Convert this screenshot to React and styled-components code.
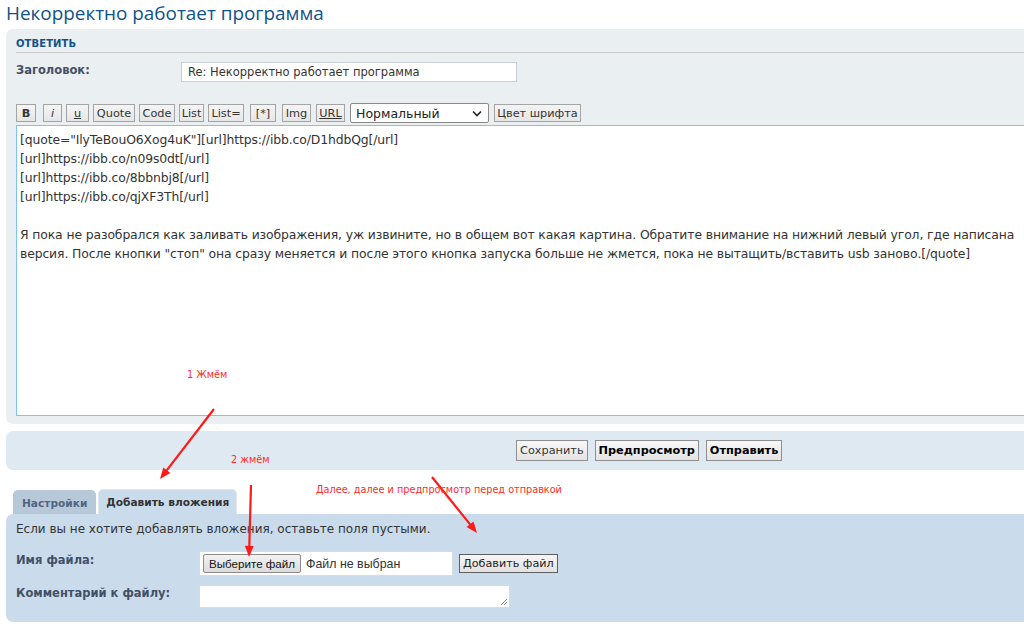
import React from "react";
import styled, { createGlobalStyle } from "styled-components";

const Global = createGlobalStyle`
  html, body { margin: 0; padding: 0; background: #fff; overflow: hidden; }
  body { font-family: "DejaVu Sans", Verdana, sans-serif; color: #333; }
  * { box-sizing: border-box; }
`;

const Page = styled.div`
  position: relative;
  width: 1024px;
  height: 628px;
  overflow: hidden;
  padding-left: 6px;
`;

const Title = styled.h2`
  margin: 0;
  height: 29px;
  padding-top: 1px;
  font-family: "Open Sans", "DejaVu Sans", sans-serif;
  font-weight: 400;
  font-size: 18.9px;
  line-height: 24px;
  color: #105289;
  white-space: nowrap;
`;

const Panel = styled.div`
  width: 1290px;
  background: ${(p) => p.$bg};
  border-radius: 7px;
  padding: ${(p) => p.$pad};
  margin-top: ${(p) => p.$mt || 0}px;
`;

const PanelHead = styled.h3`
  margin: 0 0 9px;
  padding: 0 0 2px;
  height: 16px;
  border-bottom: 1px solid #cccccc;
  font-size: 10px;
  font-weight: 700;
  text-transform: uppercase;
  color: #105289;
  line-height: 13px;
  letter-spacing: 0.1px;
`;

const FieldRow = styled.div`
  display: grid;
  grid-template-columns: ${(p) => p.$label}px auto auto;
  justify-content: start;
  align-items: start;
  column-gap: 6px;
  margin-bottom: ${(p) => p.$mb || 0}px;
`;

const Label = styled.label`
  font-size: 11.5px;
  font-weight: 700;
  color: #425067;
  line-height: 15px;
  padding-top: ${(p) => p.$pt || 0}px;
`;

const TextInput = styled.div`
  width: ${(p) => p.$w}px;
  height: 20px;
  border: 1px solid #c8cfd4;
  background: #fff;
  padding: 0 6px;
  font-size: 11.5px;
  line-height: 18px;
  color: #333;
  white-space: nowrap;
`;

const Toolbar = styled.div`
  display: flex;
  align-items: center;
  margin-bottom: 2px;
`;

const ToolBtn = styled.button`
  width: ${(p) => p.$w}px;
  height: 18px;
  padding: 0;
  margin-right: ${(p) => p.$gap ?? 4}px;
  border: 1px solid #a4a4a4;
  background: linear-gradient(#f4f4f4, #e6e6e6);
  font-family: "DejaVu Sans", Verdana, sans-serif;
  font-size: 11.3px;
  line-height: 15px;
  color: #333;
  font-weight: ${(p) => (p.$b ? 700 : 400)};
  font-style: ${(p) => (p.$i ? "italic" : "normal")};
  text-decoration: ${(p) => (p.$u ? "underline" : "none")};
  border-radius: 0;
  white-space: nowrap;
  overflow: hidden;
`;

const SelectBox = styled.div`
  width: 139px;
  height: 20px;
  margin-right: 5px;
  border: 1px solid #8a8a8a;
  border-radius: 2px;
  background: #fff;
  display: flex;
  align-items: center;
  justify-content: space-between;
  padding: 0 6px 0 5px;
  font-size: 12.5px;
  color: #222;
`;

const Editor = styled.textarea`
  display: block;
  width: 1020px;
  height: 291px;
  margin: 0;
  border: 1px solid #7fc4ef;
  background: #fff;
  padding: 4px 3px;
  resize: none;
  font-family: "DejaVu Sans", Verdana, sans-serif;
  font-size: 12.4px;
  letter-spacing: -0.12px;
  line-height: 19px;
  color: #333;
  outline: none;
  overflow: hidden;
`;

const ActionBar = styled.div`
  display: flex;
  gap: 7px;
  padding-left: 510px;
`;

const ActionBtn = styled.button`
  height: 21px;
  padding: 0 3px;
  border: 1px solid #8f8f8f;
  background: linear-gradient(#f8f8f8, #e4e4e4);
  font-family: "DejaVu Sans", Verdana, sans-serif;
  font-size: 11.3px;
  font-weight: ${(p) => (p.$b ? 700 : 400)};
  color: ${(p) => (p.$b ? "#000" : "#333")};
  border-radius: 0;
`;

const Tabs = styled.div`
  display: flex;
  gap: 2px;
  align-items: flex-end;
  padding-left: 7px;
  margin-top: 19px;
`;

const Tab = styled.div`
  height: ${(p) => (p.$active ? 25 : 24)}px;
  padding: 0 ${(p) => (p.$active ? 7 : 8)}px;
  border-radius: 5px 5px 0 0;
  background: ${(p) => (p.$active ? "#cadceb" : "#b7c9d9")};
  color: ${(p) => (p.$active ? "#333" : "#536482")};
  font-size: 10.6px;
  font-weight: 700;
  line-height: 24px;
  border: 1px solid ${(p) => (p.$active ? "#e0e8ee" : "#b7c9d9")};
  border-bottom: none;
`;

const Note = styled.p`
  margin: 0 0 14px;
  font-size: 12px;
  line-height: 16px;
  color: #333;
`;

const FileBox = styled.div`
  width: 254px;
  height: 25px;
  background: #fff;
  border: 1px solid #d4dbe1;
  display: flex;
  align-items: center;
  padding-left: 3px;
  gap: 5px;
  font-family: "Liberation Sans", Arial, sans-serif;
  font-size: 12.4px;
  color: #333;
`;

const PickBtn = styled.button`
  height: 19px;
  padding: 0 5px;
  border: 1px solid #8b8b8b;
  border-radius: 2px;
  background: linear-gradient(#f3f3f3, #dcdcdc);
  font-family: "Liberation Sans", Arial, sans-serif;
  font-size: 11.6px;
  color: #111;
`;

const AddBtn = styled.button`
  height: 19px;
  margin-top: 3px;
  padding: 0 3px;
  border: 1px solid #5f5f5f;
  background: linear-gradient(#f6f6f6, #e2e2e2);
  font-family: "DejaVu Sans", Verdana, sans-serif;
  font-size: 11.2px;
  color: #222;
  border-radius: 0;
`;

const CommentArea = styled.div`
  position: relative;
  width: 311px;
  height: 23px;
  background: #fff;
  border: 1px solid #d4dbe1;
`;

const Grip = styled.svg`
  position: absolute;
  right: 1px;
  bottom: 1px;
`;

/* Red hand-drawn notes placed over the form */
const Overlay = styled.svg`
  position: absolute;
  left: 0;
  top: 0;
  pointer-events: none;
`;

const Mark = styled.div`
  position: absolute;
  left: ${(p) => p.$x}px;
  top: ${(p) => p.$y}px;
  color: #ff2a2a;
  font-size: 9.7px;
  white-space: nowrap;
  font-family: "DejaVu Sans", Verdana, sans-serif;
`;

const arrows = [
  { x1: 214, y1: 409, x2: 160, y2: 479 },
  { x1: 251, y1: 485, x2: 249, y2: 557 },
  { x1: 432, y1: 477, x2: 477, y2: 533 },
];

function Arrow({ x1, y1, x2, y2 }) {
  const a = Math.atan2(y2 - y1, x2 - x1);
  const L = 12;
  const w = 0.38;
  const p1 = [x2 - L * Math.cos(a - w), y2 - L * Math.sin(a - w)];
  const p2 = [x2 - L * Math.cos(a + w), y2 - L * Math.sin(a + w)];
  return (
    <g>
      <line x1={x1} y1={y1} x2={x2 - 4 * Math.cos(a)} y2={y2 - 4 * Math.sin(a)} stroke="#ff1a1a" strokeWidth="2.2" />
      <polygon points={`${x2},${y2} ${p1[0]},${p1[1]} ${p2[0]},${p2[1]}`} fill="#ff1a1a" />
    </g>
  );
}

const editorText = `[quote="IlyTeBouO6Xog4uK"][url]https://ibb.co/D1hdbQg[/url]
[url]https://ibb.co/n09s0dt[/url]
[url]https://ibb.co/8bbnbj8[/url]
[url]https://ibb.co/qjXF3Th[/url]

Я пока не разобрался как заливать изображения, уж извините, но в общем вот какая картина. Обратите внимание на нижний левый угол, где написана версия. После кнопки "стоп" она сразу меняется и после этого кнопка запуска больше не жмется, пока не вытащить/вставить usb заново.[/quote]`;

export default function App() {
  return (
    <Page>
      <Global />
      <Title>Некорректно работает программа</Title>

      <Panel $bg="#eaeff2" $pad="8px 10px 8px 10px">
        <PanelHead>Ответить</PanelHead>
        <FieldRow $label={159} $mb={21}>
          <Label $pt={1}>Заголовок:</Label>
          <TextInput $w={336}>Re: Некорректно работает программа</TextInput>
        </FieldRow>
        <Toolbar>
          <ToolBtn $b $w={20} $gap={7}>B</ToolBtn>
          <ToolBtn $i $w={19}>i</ToolBtn>
          <ToolBtn $u $w={23}>u</ToolBtn>
          <ToolBtn $w={42}>Quote</ToolBtn>
          <ToolBtn $w={36}>Code</ToolBtn>
          <ToolBtn $w={25}>List</ToolBtn>
          <ToolBtn $w={36} $gap={6}>List=</ToolBtn>
          <ToolBtn $w={26} $gap={6}>[*]</ToolBtn>
          <ToolBtn $w={29} $gap={5}>Img</ToolBtn>
          <ToolBtn $u $w={29} $gap={5}>URL</ToolBtn>
          <SelectBox>
            <span>Нормальный</span>
            <svg width="10" height="7" viewBox="0 0 10 7">
              <path d="M1 1.5 L5 5.5 L9 1.5" fill="none" stroke="#222" strokeWidth="1.6" />
            </svg>
          </SelectBox>
          <ToolBtn $w={87}>Цвет шрифта</ToolBtn>
        </Toolbar>
        <Editor defaultValue={editorText} spellCheck={false} />
      </Panel>

      <Panel $bg="#dfe9f1" $pad="9px 0 9px 0" $mt={7}>
        <ActionBar>
          <ActionBtn>Сохранить</ActionBtn>
          <ActionBtn $b>Предпросмотр</ActionBtn>
          <ActionBtn $b>Отправить</ActionBtn>
        </ActionBar>
      </Panel>

      <Tabs>
        <Tab>Настройки</Tab>
        <Tab $active>Добавить вложения</Tab>
      </Tabs>
      <Panel $bg="#cadceb" $pad="7px 10px 14px 10px">
        <Note>Если вы не хотите добавлять вложения, оставьте поля пустыми.</Note>
        <FieldRow $label={177} $mb={9}>
          <Label $pt={2}>Имя файла:</Label>
          <FileBox>
            <PickBtn>Выберите файл</PickBtn>
            <span>Файл не выбран</span>
          </FileBox>
          <AddBtn>Добавить файл</AddBtn>
        </FieldRow>
        <FieldRow $label={177}>
          <Label $pt={1}>Комментарий к файлу:</Label>
          <CommentArea>
            <Grip width="8" height="8" viewBox="0 0 8 8">
              <path d="M7 1 L1 7 M7 4 L4 7" stroke="#888" strokeWidth="1" />
            </Grip>
          </CommentArea>
        </FieldRow>
      </Panel>

      <Overlay width="1024" height="628" viewBox="0 0 1024 628">
        {arrows.map((a, i) => (
          <Arrow key={i} {...a} />
        ))}
      </Overlay>
      <Mark $x={187} $y={369}>1 Жмём</Mark>
      <Mark $x={231} $y={454}>2 жмём</Mark>
      <Mark $x={316} $y={484}>Далее, далее и предпросмотр перед отправкой</Mark>
    </Page>
  );
}
